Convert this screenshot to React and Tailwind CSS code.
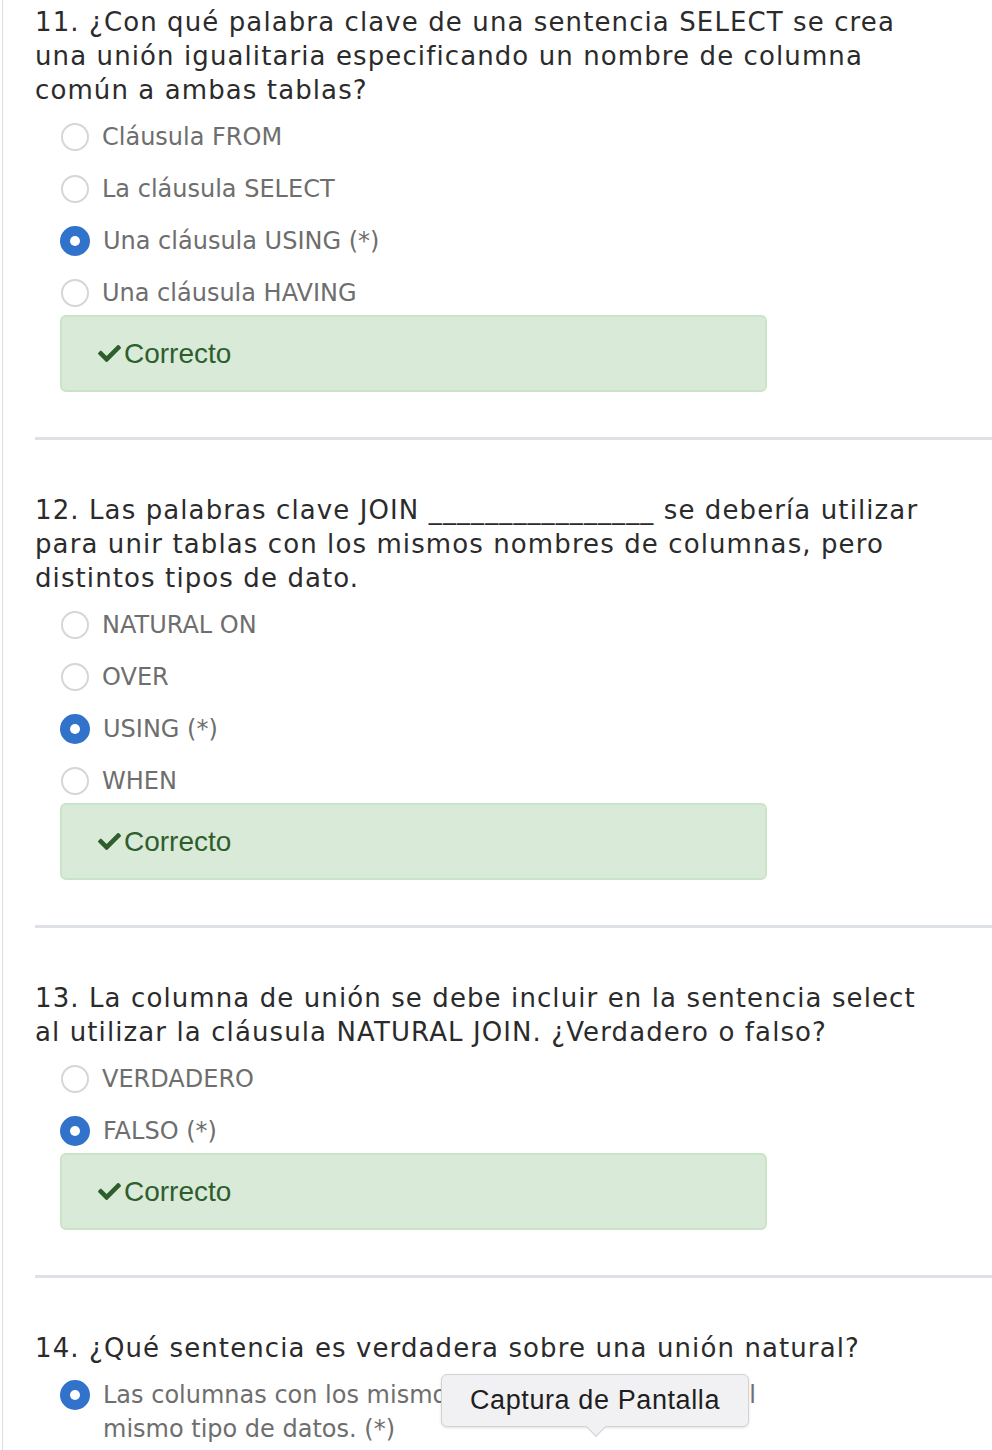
import { FaCheck } from "react-icons/fa";

const questions = [
  {
    text: "11. ¿Con qué palabra clave de una sentencia SELECT se crea una unión igualitaria especificando un nombre de columna común a ambas tablas?",
    options: ["Cláusula FROM", "La cláusula SELECT", "Una cláusula USING (*)", "Una cláusula HAVING"],
    answer: 2,
    feedback: true,
  },
  {
    text: "12. Las palabras clave JOIN ________________ se debería utilizar para unir tablas con los mismos nombres de columnas, pero distintos tipos de dato.",
    options: ["NATURAL ON", "OVER", "USING (*)", "WHEN"],
    answer: 2,
    feedback: true,
  },
  {
    text: "13. La columna de unión se debe incluir en la sentencia select al utilizar la cláusula NATURAL JOIN. ¿Verdadero o falso?",
    options: ["VERDADERO", "FALSO (*)"],
    answer: 1,
    feedback: true,
  },
  {
    text: "14. ¿Qué sentencia es verdadera sobre una unión natural?",
    options: ["Las columnas con los mismos nombres deben tener el mismo tipo de datos. (*)"],
    answer: 0,
    feedback: false,
    tooltip: true,
  },
];

function Radio({ checked }) {
  if (checked) {
    return (
      <span className="mt-[2px] flex h-[30px] w-[30px] shrink-0 items-center justify-center rounded-full bg-[#3172cb]">
        <span className="h-[10px] w-[10px] rounded-full bg-white" />
      </span>
    );
  }
  return <span className="mt-[3px] ml-[1px] h-[28px] w-[28px] shrink-0 rounded-full border-2 border-[#d6d6d6] bg-white" />;
}

function Tooltip() {
  return (
    <div className="absolute left-[381px] top-[2px] z-10 flex h-[53px] w-[308px] items-center justify-center rounded-[6px] border border-[#d2d2d4] bg-[#f1f1f3] shadow-[0_1px_3px_rgba(0,0,0,0.12)]">
      <span className="font-['Liberation_Sans',Arial,sans-serif] text-[27px] tracking-[0.6px] text-[#1e1e20]">Captura de Pantalla</span>
      <span className="absolute bottom-[-8px] left-[147px] h-[14px] w-[14px] rotate-45 border-b border-r border-[#d2d2d4] bg-[#f1f1f3]" />
    </div>
  );
}

function Question({ q, first }) {
  return (
    <section className={first ? "pt-[5px]" : "pt-[53px]"}>
      <p className="w-[908px] text-[26px] leading-[34px] tracking-[1.1px] text-[#2b2b2b]">{q.text}</p>
      <div className="mt-[7px] flex flex-col gap-[6px] pl-[25px]">
        {q.options.map((opt, i) => (
          <div key={opt} className="relative flex items-start gap-[13px] py-[6px]">
            <Radio checked={i === q.answer} />
            <span className={`text-[24px] leading-[34px] text-[#6e6e6e] ${q.tooltip ? "w-[660px]" : ""}`}>{opt}</span>
            {q.tooltip && <Tooltip />}
          </div>
        ))}
      </div>
      {q.feedback && (
        <>
          <div className="ml-[25px] mt-[-1px] flex h-[77px] w-[707px] items-center rounded-[6px] border-2 border-[#c9e4c6] bg-[#d9ead9] pl-[35px] font-['Liberation_Sans',Arial,sans-serif] text-[28px] text-[#2e5e2c]">
            <FaCheck className="mr-[2px] h-[23px] w-[25px]" />
            <span>Correcto</span>
          </div>
          <div className="mt-[45px] h-[3px] w-full bg-[#dee1e5]" />
        </>
      )}
    </section>
  );
}

export default function App() {
  return (
    <div className="h-[1450px] overflow-hidden bg-white">
      <div className="ml-[2px] h-full border-l border-[#dedede] pl-[32px] font-['DejaVu_Sans',Verdana,sans-serif]">
        {questions.map((q, i) => (
          <Question key={q.text} q={q} first={i === 0} />
        ))}
      </div>
    </div>
  );
}
